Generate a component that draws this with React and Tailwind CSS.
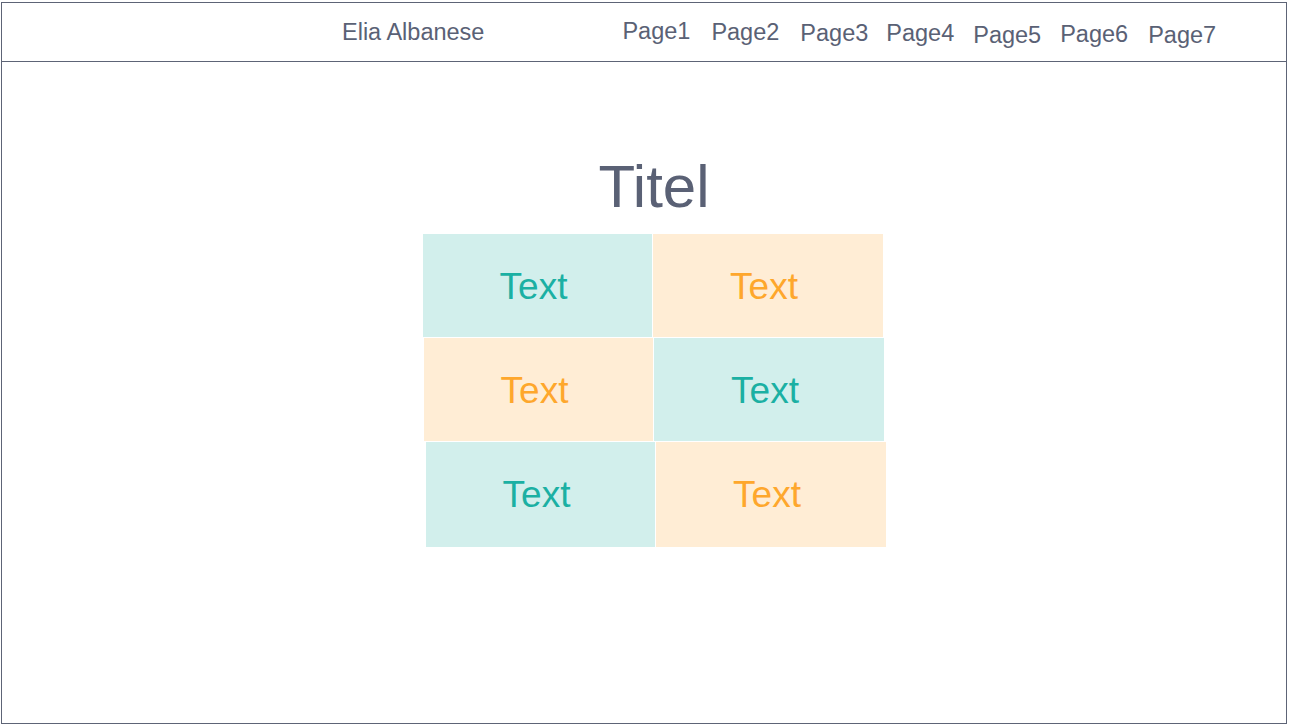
export default function App() {
  const font = { fontFamily: '"Liberation Sans", Arial, sans-serif' };
  return (
    <div className="w-[1289px] h-[725px] bg-white pt-[2px] pl-[1px]" style={font}>
      <div className="w-[1286px] h-[722px] border border-[#5d6476] flex flex-col">
        <div className="h-[59px] border-b border-[#5d6476] flex items-start text-[23.5px] text-[#5a6175] shrink-0">
          <div className="ml-[340px] mt-[12px]">Elia Albanese</div>
          <div className="ml-[138px] mt-[11px]">Page1</div>
          <div className="ml-[21px] mt-[12px]">Page2</div>
          <div className="ml-[21px] mt-[13px]">Page3</div>
          <div className="ml-[18px] mt-[13px]">Page4</div>
          <div className="ml-[19px] mt-[15px]">Page5</div>
          <div className="ml-[19px] mt-[14px]">Page6</div>
          <div className="ml-[20px] mt-[15px]">Page7</div>
        </div>
        <div className="flex flex-col">
          <div className="mt-[95px] text-[60px] leading-[60px] text-[#5a6175] text-center pl-[20px]">Titel</div>
          <div className="mt-[17px] flex flex-col gap-px text-[37px]">
            <div className="flex gap-px ml-[421px] h-[103px]">
              <div className="w-[229px] bg-[#d2efec] text-[#1bb0a3] flex items-center justify-center pr-[8px] pt-[2px]">Text</div>
              <div className="w-[230px] bg-[#ffedd5] text-[#fea72c] flex items-center justify-center pr-[8px] pt-[2px]">Text</div>
            </div>
            <div className="flex gap-px ml-[422px] h-[103px]">
              <div className="w-[229px] bg-[#ffedd5] text-[#fea72c] flex items-center justify-center pr-[8px] pt-[2px]">Text</div>
              <div className="w-[230px] bg-[#d2efec] text-[#1bb0a3] flex items-center justify-center pr-[8px] pt-[2px]">Text</div>
            </div>
            <div className="flex gap-px ml-[424px] h-[105px]">
              <div className="w-[229px] bg-[#d2efec] text-[#1bb0a3] flex items-center justify-center pr-[8px] pt-[1px]">Text</div>
              <div className="w-[230px] bg-[#ffedd5] text-[#fea72c] flex items-center justify-center pr-[8px] pt-[1px]">Text</div>
            </div>
          </div>
        </div>
      </div>
    </div>
  );
}
